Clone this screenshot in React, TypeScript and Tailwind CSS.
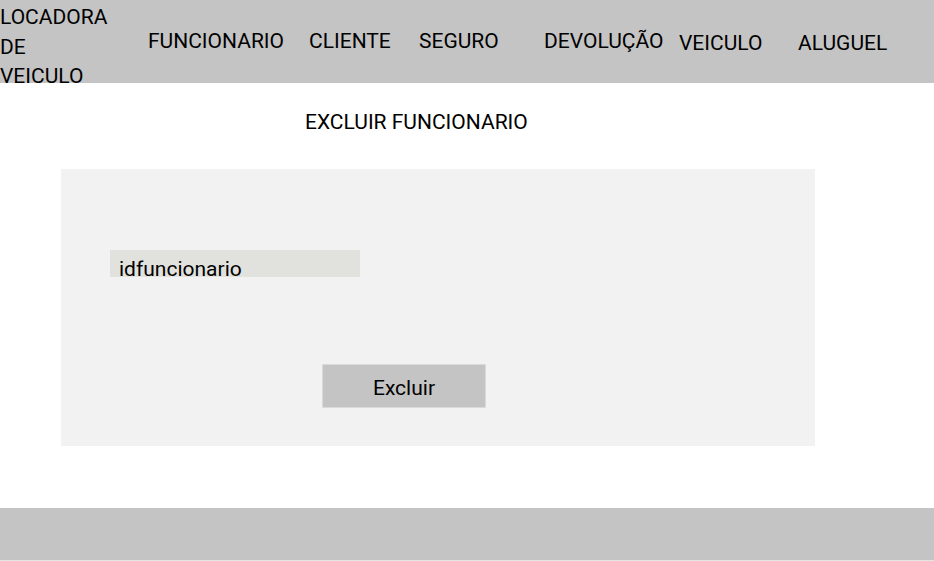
const navItems = [
  { label: 'FUNCIONARIO', w: 'w-[161px]', pad: '' },
  { label: 'CLIENTE', w: 'w-[110px]', pad: '' },
  { label: 'SEGURO', w: 'w-[125px]', pad: '' },
  { label: 'DEVOLUÇÃO', w: 'w-[135px]', pad: '' },
  { label: 'VEICULO', w: 'w-[119px]', pad: 'pt-[5px]' },
  { label: 'ALUGUEL', w: 'w-[120px]', pad: 'pt-[5px]' },
];

export default function App() {
  return (
    <div className="min-h-[561px] w-[934px] bg-white text-[21px] text-black font-['Roboto',sans-serif] flex flex-col">
      {/* Header */}
      <header className="h-[83px] bg-[#c4c4c4] flex">
        <div className="w-[148px] shrink-0 pt-[3px]">
          <p className="max-w-[110px] leading-[29.5px]">LOCADORA DE VEICULO</p>
        </div>
        <nav className="flex items-center pb-[1px] leading-[25px]">
          {navItems.map((item) => (
            <span key={item.label} className={`${item.w} ${item.pad} shrink-0`}>
              {item.label}
            </span>
          ))}
        </nav>
      </header>

      {/* Title */}
      <h1 className="ml-[305px] mt-[27px] leading-[25px]">EXCLUIR FUNCIONARIO</h1>

      {/* Form panel */}
      <div className="ml-[61px] mt-[34px] w-[754px] h-[277px] bg-[#f2f2f2] flex flex-col">
        <div className="ml-[49px] mt-[81px] w-[250px] h-[27px] bg-[#e1e1dd] pl-[9px] pt-[9px] leading-[21px]">
          idfuncionario
        </div>
        <button className="ml-[261px] mt-[87px] w-[164px] h-[44px] bg-[#c4c4c4] border border-[#dadada] pt-[4px] flex items-center justify-center leading-[25px]">
          Excluir
        </button>
      </div>

      {/* Footer */}
      <footer className="mt-[62px] h-[53px] bg-[#c4c4c4] border-b border-[#e4e4e4]" />
    </div>
  );
}
